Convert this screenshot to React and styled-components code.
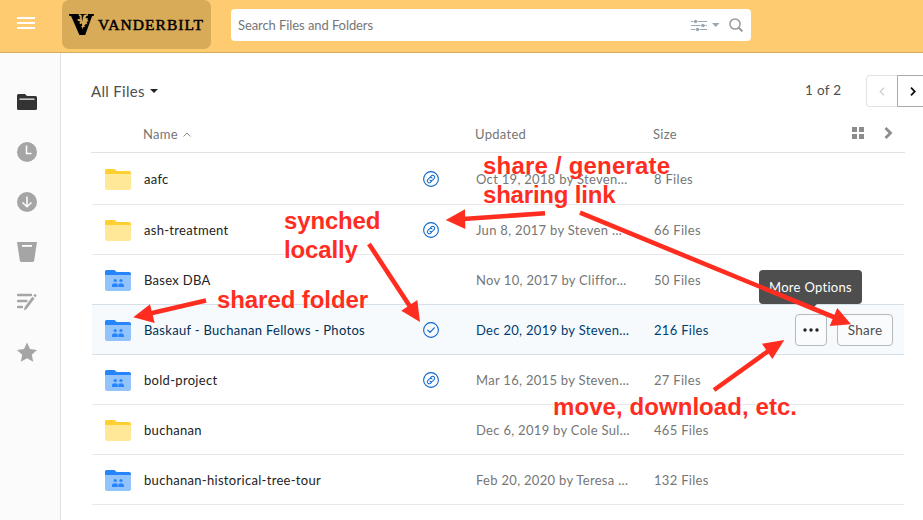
import React from "react";
import styled, { createGlobalStyle, css } from "styled-components";

const GlobalStyle = createGlobalStyle`
  *, *::before, *::after { box-sizing: border-box; }
  html, body { margin: 0; padding: 0; overflow: hidden; background: #fff; }
  body { font-family: Lato, "Liberation Sans", sans-serif; font-size: 13px; letter-spacing: 0.3px; color: #222; }
`;

const Page = styled.div`
  position: relative;
  width: 923px;
  height: 520px;
  overflow: hidden;
  display: flex;
  flex-direction: column;
`;

const Header = styled.header`
  height: 53px;
  flex: none;
  display: flex;
  align-items: flex-start;
  background: #ffcb70;
  border-bottom: 1px solid #d9ad60;
`;

const MenuButton = styled.div`
  width: 18px;
  margin: 17px 27px 0 17px;
  display: grid;
  gap: 3px;
`;

const MenuBar = styled.span`
  height: 2px;
  background: #fff;
`;

const Brand = styled.div`
  width: 149px;
  height: 49px;
  border-radius: 7px;
  background: #d8ab59;
  display: flex;
  align-items: center;
  padding-left: 7px;
  gap: 4px;
  color: #000;
`;

const BrandName = styled.span`
  font: 400 15.5px/20px "Liberation Serif", serif;
  letter-spacing: 1.05px;
  -webkit-text-stroke: 0.5px #000;
  white-space: nowrap;
`;

const SearchBox = styled.div`
  width: 520px;
  height: 32px;
  margin: 9px 0 0 20px;
  padding: 0 8px 0 7px;
  border-radius: 4px;
  background: #fff;
  display: flex;
  align-items: center;
  color: #767676;
  letter-spacing: -0.08px;
`;

const SearchText = styled.span`
  flex: 1;
  margin-top: -1px;
`;

const SearchTools = styled.div`
  display: flex;
  align-items: center;
`;

const Body = styled.div`
  flex: 1;
  display: flex;
  min-height: 0;
`;

const Sidebar = styled.nav`
  width: 61px;
  flex: none;
  background: #fbfbfb;
  border-right: 1px solid #e2e2e2;
  display: flex;
  flex-direction: column;
  align-items: flex-start;
  gap: 30px;
  padding: 39px 0 0 17px;
`;

const Main = styled.main`
  flex: 1;
  min-width: 0;
  padding-left: 30px;
`;

const TitleBar = styled.div`
  height: 54px;
  padding-top: 22px;
  display: flex;
  justify-content: space-between;
`;

const Title = styled.h1`
  margin: 0;
  height: 32px;
  display: flex;
  align-items: center;
  gap: 5px;
  font-size: 15px;
  font-weight: 400;
  color: #4e4e4e;
`;

const Pager = styled.div`
  display: flex;
  align-items: flex-start;
  font-size: 13.5px;
  color: #4e4e4e;
`;

const PageCount = styled.span`
  width: 61px;
  line-height: 30px;
`;

const PageButton = styled.span`
  width: 32px;
  height: 32px;
  flex: none;
  display: flex;
  align-items: center;
  justify-content: center;
  border: 1px solid ${(p) => (p.$active ? "#a9a9a9" : "#e2e2e2")};
  border-right-width: ${(p) => (p.$active ? "1px" : "0")};
  border-radius: ${(p) => (p.$active ? "0 4px 4px 0" : "4px 0 0 4px")};
  ${(p) => !p.$active && "width: 31px;"}
  ${(p) => p.$active && "margin-right: -6px;"}
`;

const columns = css`
  display: grid;
  grid-template-columns: 52px 279px 53px 178px 120px 1fr;
  align-items: center;
`;

const HeadRow = styled.div`
  ${columns}
  width: 814px;
  height: 46px;
  padding-top: 9px;
  border-bottom: 1px solid #e2e2e2;
  color: #767676;
`;

const NameHead = styled.span`
  display: flex;
  align-items: center;
  gap: 5px;
`;

const ViewTools = styled.div`
  justify-self: end;
  margin: -3px 12px 0 0;
  display: flex;
  align-items: center;
  gap: 20px;
`;

const Row = styled.div`
  ${columns}
  width: 812px;
  margin-left: 1px;
  height: ${(p) => (p.$tall ? 52 : 50)}px;
  padding-top: 2px;
  border-bottom: 1px solid ${(p) => (p.$selected ? "#d5e0e8" : "#e8e8e8")};
  background: ${(p) => (p.$selected ? "#f6fafd" : "#fff")};
  color: ${(p) => (p.$selected ? "#003c71" : "#767676")};
  ${(p) => p.$beforeSelected && "border-bottom-color: #d5e0e8;"}
`;

const FolderCell = styled.span`
  display: flex;
  padding-left: 13px;
`;

const NameCell = styled.span`
  color: ${(p) => (p.$selected ? "#003056" : "#222")};
  margin-top: -2px;
  white-space: nowrap;
`;

const StatusCell = styled.span`
  display: flex;
  margin-top: -1px;
`;

const Cell = styled.span`
  white-space: nowrap;
`;

const DataCell = styled(Cell)`
  margin-top: -2px;
`;

const Actions = styled.div`
  position: relative;
  justify-self: end;
  display: flex;
  gap: 10px;
  margin: -1px 11px 0 0;
`;

const ActionButton = styled.span`
  width: ${(p) => p.$width}px;
  height: 32px;
  display: flex;
  align-items: center;
  justify-content: center;
  border: 1px solid #b5babd;
  border-radius: 4px;
  background: #f9fbfd;
  color: #4e4e4e;
  font-size: 13.5px;
`;

const Tooltip = styled.div`
  position: absolute;
  left: -36px;
  top: -44px;
  width: 103px;
  height: 34px;
  display: flex;
  align-items: center;
  justify-content: center;
  border-radius: 4px;
  background: #4e4e4e;
  color: #fff;
  white-space: nowrap;
  &::after {
    content: "";
    position: absolute;
    left: 46px;
    top: 34px;
    border: 6px solid transparent;
    border-bottom: 0;
    border-top-color: #4e4e4e;
  }
`;

const Arrows = styled.svg`
  position: absolute;
  inset: 0;
  pointer-events: none;
`;

const Note = styled.div`
  position: absolute;
  left: ${(p) => p.$x}px;
  top: ${(p) => p.$y}px;
  font: 700 24px/29px "Liberation Sans", Arial, sans-serif;
  letter-spacing: ${(p) => p.$spacing || 0}px;
  color: #ff2d1f;
  white-space: pre;
`;

const FolderIcon = ({ shared }) => (
  <svg width="26" height="21" viewBox="0 0 26 21">
    <path d="M0 1.5Q0 0 1.5 0H9q1 0 1.6.9L11.5 2H24q2 0 2 2v5H0z" fill={shared ? "#2684fc" : "#ffd02f"} />
    <path d="M0 5h26v14q0 2-2 2H2q-2 0-2-2z" fill={shared ? "#93c3fb" : "#ffe999"} />
    {shared && (
      <g fill="#2684fc">
        <circle cx="10.2" cy="10.5" r="1.6" />
        <circle cx="16" cy="10.5" r="1.6" />
        <path d="M7 17v-1.5Q7 13.3 10 13.3t2.7 2.2V17zM13.3 17v-1.5Q13.3 13.3 16 13.3t3 2.2V17z" />
      </g>
    )}
  </svg>
);

const StatusIcon = ({ kind }) => (
  <svg width="16" height="16" viewBox="0 0 16 16" fill="none" stroke="#0d67cb" strokeLinecap="round" strokeLinejoin="round">
    <circle cx="8" cy="8" r="7.4" strokeWidth="1.1" />
    {kind === "check" ? (
      <path d="M4.8 8.2l2.2 2.2 4.3-4.6" strokeWidth="1.2" />
    ) : (
      <g transform="rotate(-45 8 8)" strokeWidth="1">
        <path d="M6.8 10H5.6a2 2 0 010-4h2.1a2 2 0 011.8 2" />
        <path d="M9.2 6h1.2a2 2 0 010 4H8.3a2 2 0 01-1.8-2" />
      </g>
    )}
  </svg>
);

const NavIcon = ({ children, color = "#a5a5a5" }) => (
  <svg width="20" height="20" viewBox="0 0 20 20" fill={color}>{children}</svg>
);

const Caret = ({ color = "#222", width = 8, height = 4 }) => (
  <svg width={width} height={height} viewBox="0 0 8 4" preserveAspectRatio="none"><path d="M0 0h8L4 4z" fill={color} /></svg>
);

const Emblem = () => (
  <svg width="25" height="21" viewBox="0 0 25 21">
    <path d="M0 0h25v1.6l-2 .6L16.2 21h-5.8L2.2 2.2 0 1.6z" />
    <path d="M9.5 0l.5 2 1.6 1-1.4.8 1.6 1.4-2.3-.2-1.4.6 1.2 1.5 2.4.4-1.4 1.2.8 1.5 1.8-1 .3 2.8-1.2.6 1.2.8.3 2.1.9-2.5 2-.6-1.2-1 1.7-1.4 1.9.3-1.3-1.5.6-1.2 2-.2-1.5-1.2L18.7 4l-2.2.2L17 2.4 19 1.6V0l-4.2 1-1 3.2-.6 3.8-.4-4L12.6 1z" fill="#d8ab59" />
  </svg>
);

const files = [
  { name: "aafc", status: "link", updated: "Oct 19, 2018 by Steven…", size: "8 Files" },
  { name: "ash-treatment", status: "link", updated: "Jun 8, 2017 by Steven …", size: "66 Files" },
  { name: "Basex DBA", shared: true, updated: "Nov 10, 2017 by Cliffor…", size: "50 Files" },
  { name: "Baskauf - Buchanan Fellows - Photos", shared: true, status: "check", updated: "Dec 20, 2019 by Steven…", size: "216 Files", selected: true },
  { name: "bold-project", shared: true, status: "link", updated: "Mar 16, 2015 by Steven…", size: "27 Files" },
  { name: "buchanan", updated: "Dec 6, 2019 by Cole Sul…", size: "465 Files" },
  { name: "buchanan-historical-tree-tour", shared: true, updated: "Feb 20, 2020 by Teresa …", size: "132 Files" },
];

const notes = [
  { x: 483, y: 151, text: "share / generate", spacing: 0.2 },
  { x: 483, y: 180, text: "sharing link", spacing: -0.2 },
  { x: 284, y: 206, text: "synched", spacing: -0.15 },
  { x: 284, y: 235, text: "locally", spacing: -0.15 },
  { x: 217, y: 285, text: "shared folder", spacing: -0.08 },
  { x: 553, y: 392, text: "move, download, etc.", spacing: 0.07 },
];

const arrows = [
  { line: "M369 244L411 308", head: "420,322 401.3,310.7 417.3,300" },
  { line: "M206 300.5L150 313.5", head: "133.3,317.3 150,304.3 154.7,323" },
  { line: "M545 213.3L463 219", head: "445.7,220 465,209.3 465.3,229" },
  { line: "M580 212.7L836 318", head: "851,324.3 837.3,308 829.7,326" },
  { line: "M714 390L769 350.5", head: "784.3,340 762,343.7 772.3,359" },
];

export default function App() {
  return (
    <Page>
      <GlobalStyle />
      <Header>
        <MenuButton><MenuBar /><MenuBar /><MenuBar /></MenuButton>
        <Brand><Emblem /><BrandName>VANDERBILT</BrandName></Brand>
        <SearchBox>
          <SearchText>Search Files and Folders</SearchText>
          <SearchTools>
            <svg width="16" height="13" viewBox="0 0 16 13" stroke="#9aa7b0" fill="#9aa7b0">
              <path d="M0 2.5h16M0 6.5h16M0 10.5h16" />
              <g stroke="none"><circle cx="4.5" cy="2.5" r="1.7" /><circle cx="12" cy="6.5" r="1.7" /><circle cx="6.5" cy="10.5" r="1.7" /></g>
              <path d="M2 2.5h.5M6.6 2.5h.5M9.4 6.5h.5M14.1 6.5h.5M4 10.5h.5M8.5 10.5h.5" stroke="#fff" strokeWidth="1.5" />
            </svg>
            <svg width="22" height="14" viewBox="0 0 22 14"><path d="M5 5h7.5L8.7 9z" fill="#9aa7b0" /></svg>
            <svg width="14" height="14" viewBox="0 0 14 14" fill="none" stroke="#9b9b9b"><circle cx="6" cy="6" r="5.1" strokeWidth="1.5" /><path d="M9.8 9.8l3.6 3.6" strokeWidth="2" /></svg>
          </SearchTools>
        </SearchBox>
      </Header>
      <Body>
        <Sidebar>
          <NavIcon color="#333"><path d="M0 3.5Q0 2 1.5 2H8l2 2h8.5Q20 4 20 5.5v11q0 1.5-1.5 1.5h-17Q0 18 0 16.5z" /><path d="M2.5 6.5h15v1.3h-15z" fill="#eee" /></NavIcon>
          <NavIcon><circle cx="10" cy="10" r="10" /><path d="M9.5 3.5v8h5" fill="none" stroke="#fff" strokeWidth="1.5" /></NavIcon>
          <NavIcon><circle cx="10" cy="10" r="10" /><path d="M10 4.5v10M5.5 10.5l4.5 4.3 4.5-4.3" fill="none" stroke="#fff" strokeWidth="1.5" /></NavIcon>
          <NavIcon><path d="M0 0h20l-2.8 18.5Q17 20 15.5 20h-11Q3 20 2.8 18.5z" /><path d="M5 3h10v1.8H5z" fill="#fff" /></NavIcon>
          <NavIcon><path d="M1 2.5h13M1 8.5h8.5M1 14.5h4" transform="translate(0 .5)" stroke="#a5a5a5" strokeWidth="2.4" strokeLinecap="round" /><path d="M6.8 18.5l.9-3.6L15.3 4.8l2.2 1.7-7.6 10.3zM16.3 3.7l1.4-1.7q1.5-.2 2 1.6l-1.3 1.7z" /></NavIcon>
          <NavIcon><path d="M10 .5l3 6.6 7 .8-5.2 4.8 1.4 7-6.2-3.5-6.2 3.5 1.4-7L0 7.9l7-.8z" /></NavIcon>
        </Sidebar>
        <Main>
          <TitleBar>
            <Title>All Files <Caret /></Title>
            <Pager>
              <PageCount>1 of 2</PageCount>
              <PageButton><svg width="6" height="9" viewBox="0 0 6 9" fill="none" stroke="#d0d0d0" strokeWidth="1.3"><path d="M5 .7L1.2 4.5 5 8.3" /></svg></PageButton>
              <PageButton $active><svg width="6" height="9" viewBox="0 0 6 9" fill="none" stroke="#111" strokeWidth="1.8"><path d="M1 .7l3.8 3.8L1 8.3" /></svg></PageButton>
            </Pager>
          </TitleBar>
          <HeadRow>
            <span />
            <NameHead>Name <svg width="8" height="5" viewBox="0 0 8 5" fill="none" stroke="#8b8b8b"><path d="M.5 4.5L4 1l3.5 3.5" /></svg></NameHead>
            <span />
            <Cell>Updated</Cell>
            <Cell>Size</Cell>
            <ViewTools>
              <svg width="12" height="12" viewBox="0 0 12 12" fill="#8d8d8d"><path d="M0 0h5v5H0zM7 0h5v5H7zM0 7h5v5H0zM7 7h5v5H7z" /></svg>
              <svg width="9" height="12" viewBox="0 0 9 12" fill="none" stroke="#8d8d8d" strokeWidth="2.8"><path d="M1.5 1l5 5-5 5" /></svg>
            </ViewTools>
          </HeadRow>
          {files.map((f, i) => (
            <Row key={f.name} $tall={i === 0} $selected={f.selected} $beforeSelected={i === 2}>
              <FolderCell><FolderIcon shared={f.shared} /></FolderCell>
              <NameCell $selected={f.selected}>{f.name}</NameCell>
              <StatusCell>{f.status && <StatusIcon kind={f.status} />}</StatusCell>
              <DataCell>{f.updated}</DataCell>
              <DataCell>{f.size}</DataCell>
              {f.selected && (
                <Actions>
                  <ActionButton $width={32}>
                    <svg width="16" height="4" viewBox="0 0 16 4" fill="#222"><circle cx="2" cy="2" r="1.7" /><circle cx="8" cy="2" r="1.7" /><circle cx="14" cy="2" r="1.7" /></svg>
                  </ActionButton>
                  <ActionButton $width={56}>Share</ActionButton>
                  <Tooltip>More Options</Tooltip>
                </Actions>
              )}
            </Row>
          ))}
        </Main>
      </Body>
      <Arrows width="923" height="520" viewBox="0 0 923 520">
        {arrows.map((a) => (
          <g key={a.line}>
            <path d={a.line} stroke="#ff2d1f" strokeWidth="4.6" />
            <polygon points={a.head} fill="#ff2d1f" />
          </g>
        ))}
      </Arrows>
      {notes.map((n) => <Note key={n.text} $x={n.x} $y={n.y} $spacing={n.spacing}>{n.text}</Note>)}
    </Page>
  );
}
